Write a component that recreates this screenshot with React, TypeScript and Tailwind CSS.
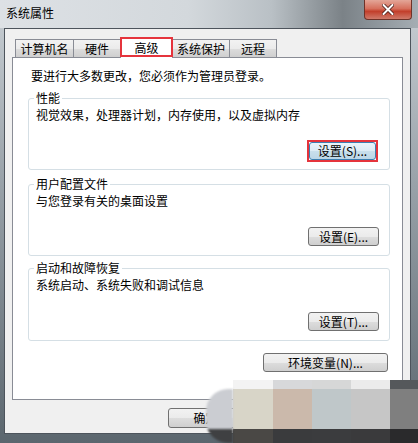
import React from "react";

const font = "font-['Noto_Sans_CJK_SC','Noto_Sans',sans-serif]";
const btn =
  "flex items-center justify-center rounded-[3px] border border-[#707070] bg-[linear-gradient(to_bottom,#f2f2f2_0%,#ebebeb_50%,#dddddd_51%,#cfcfcf_100%)] text-[12px] leading-none text-black";

function Tab({ label, w, active }: { label: string; w: string; active?: boolean }) {
  if (active) {
    return (
      <div className={`relative z-10 -ml-px -mb-px h-[21px] ${w} -mt-[3px] border border-b-0 border-[#898c95] bg-white flex items-center justify-center text-[12px]`}>
        {label}
        {/* red highlight */}
        <div className="absolute -left-[1px] -right-[1px] top-[-1px] bottom-[1px] border-2 border-[#e5343c]" />
      </div>
    );
  }
  return (
    <div className={`-ml-px h-[18px] ${w} border border-b-0 border-[#898c95] bg-[linear-gradient(to_bottom,#f2f2f2_0%,#ebebeb_50%,#dddddd_51%,#cfcfcf_100%)] flex items-center justify-center text-[12px] first:ml-0`}>
      {label}
    </div>
  );
}

function Group({
  title,
  desc,
  label,
  focused,
  h,
}: {
  title: string;
  desc: string;
  label: string;
  focused?: boolean;
  h: string;
}) {
  return (
    <div className={`relative ml-[15px] w-[362px] ${h} rounded-[3px] border border-[#d5dfe5] flex flex-col pl-[7px] pr-[10px] pt-[9px] ${focused ? "pb-[7px]" : "pb-[9px]"}`}>
      <span className="absolute left-[5px] top-[-8px] bg-white px-[2px] text-[12px] leading-[14px]">{title}</span>
      <p className="text-[12px] leading-[14px]">{desc}</p>
      {focused ? (
        <div className="mt-auto self-end mr-[1px] border-2 border-[#e5343c]">
          <div className="flex items-center justify-center w-[67px] h-[18px] rounded-[3px] border border-[#3c7fb1] bg-[linear-gradient(to_bottom,#eaf4fa_0%,#dcebf5_50%,#c9dfec_51%,#bcd6e7_100%)] text-[12px] leading-none">
            {label}
          </div>
        </div>
      ) : (
        <div className={`mt-auto self-end w-[71px] h-[19px] ${btn}`}>{label}</div>
      )}
    </div>
  );
}

export default function App() {
  return (
    <div className={`relative w-[418px] h-[443px] overflow-hidden bg-[linear-gradient(to_bottom,#c9cfd4_0%,#9aa3aa_40%,#5b666e_100%)] text-black ${font}`}>
      {/* title bar */}
      <div className="h-[28px] flex items-start justify-between bg-[linear-gradient(to_right,#dde1e5_0%,#d3d8dc_45%,#b9c0c5_65%,#7b8287_82%,#8d959b_90%,#a5adb3_100%)]">
        <span className="pl-[6px] pt-[6px] text-[12px] leading-[14px]">系统属性</span>
        <div className="mr-[6px] w-[48px] h-[20px] rounded-b-[4px] border border-t-0 border-[#6e3228] bg-[linear-gradient(to_bottom,#e3a698_0%,#d6705d_45%,#c23f2b_60%,#cf7a6a_100%)] flex items-center justify-center">
          <svg width="12" height="11" viewBox="0 0 12 11">
            <path d="M1.5 1 L10.5 10 M10.5 1 L1.5 10" stroke="#4b1d17" strokeWidth="3.6" strokeLinecap="round" />
            <path d="M1.5 1 L10.5 10 M10.5 1 L1.5 10" stroke="#ffffff" strokeWidth="2" strokeLinecap="round" />
          </svg>
        </div>
      </div>

      {/* client */}
      <div className="ml-[4px] w-[407px] h-[406px] border border-[#4d545c] bg-[#f0f0f0] flex flex-col">
        <div className="flex items-end pl-[10px] pt-[10px] h-[28px]">
          <Tab label="计算机名" w="w-[59px]" />
          <Tab label="硬件" w="w-[48px]" />
          <Tab label="高级" w="w-[53px]" active />
          <Tab label="系统保护" w="w-[58px]" />
          <Tab label="远程" w="w-[48px]" />
        </div>
        <div className="ml-[7px] w-[391px] h-[343px] border border-[#898c95] bg-white flex flex-col pt-[11px]">
          <p className="pl-[18px] text-[12px] leading-[14px]">要进行大多数更改，您必须作为管理员登录。</p>
          <div className="mt-[15px]">
            <Group title="性能" desc="视觉效果，处理器计划，内存使用，以及虚拟内存" label="设置(S)..." focused h="h-[72px]" />
          </div>
          <div className="mt-[14px]">
            <Group title="用户配置文件" desc="与您登录有关的桌面设置" label="设置(E)..." h="h-[72px]" />
          </div>
          <div className="mt-[12px]">
            <Group title="启动和故障恢复" desc="系统启动、系统失败和调试信息" label="设置(T)..." h="h-[73px]" />
          </div>
          <div className="mt-[12px] ml-[250px] w-[125px] h-[19px]">
            <div className={`w-full h-full ${btn}`}>环境变量(N)...</div>
          </div>
        </div>
        <div className="flex gap-[6px] pl-[163px] mt-[8px]">
          <div className={`w-[75px] h-[20px] ${btn}`}>确定</div>
          <div className={`w-[75px] h-[20px] ${btn}`}>取消</div>
          <div className={`w-[75px] h-[20px] ${btn}`}>应用(A)</div>
        </div>
      </div>

      {/* watermark overlay */}
      <div className="absolute left-[206px] top-[380px] right-0 bottom-0 flex">
        <div className="w-[27px] flex flex-col pt-[9px]">
          <div className="flex-1 rounded-l-[22px] overflow-hidden flex flex-col blur-[1px]">
            <div className="h-[40px] bg-[#cbcdd2]" />
            <div className="flex-1 bg-[#3f4042]" />
          </div>
        </div>
        {[
          ["#f3f3f3", "#d8d5c8", "#4a4845", "w-[40px]"],
          ["#d7d8da", "#cbb9ab", "#3a3b3d", "w-[39px]"],
          ["#d6d7d7", "#bfc7c9", "#3b3c3e", "w-[39px]"],
          ["#ebebeb", "#c6c6c6", "#3a3a3c", "w-[39px]"],
          ["#55585b", "#7f7f7f", "#2a2a2c", "flex-1"],
        ].map(([t, m, b, w], i) => (
          <div key={i} className={`${w} flex flex-col`}>
            <div className="h-[9px]" style={{ background: t }} />
            <div className="h-[40px]" style={{ background: m }} />
            <div className="flex-1" style={{ background: b }} />
          </div>
        ))}
      </div>
    </div>
  );
}
